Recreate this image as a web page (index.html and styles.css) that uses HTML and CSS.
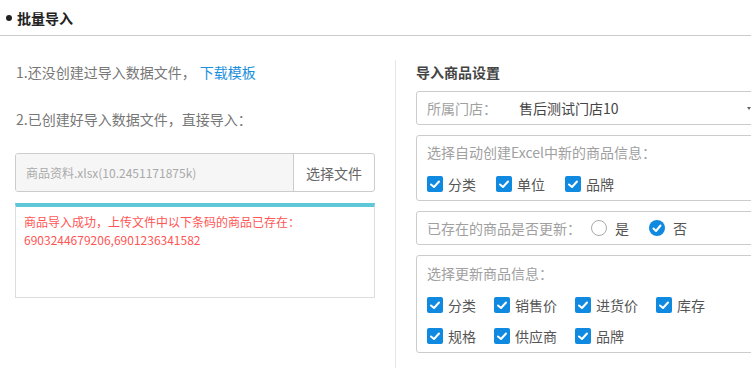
FILE: index.html
```html
<!DOCTYPE html>
<html lang="zh-CN">
<head>
    <meta charset="UTF-8">
    <meta name="viewport" content="width=device-width, initial-scale=1.0">
    <title>批量导入</title>
    <link rel="stylesheet" href="styles.css">
</head>
<body>

    <div class="page-title"><span class="dot"></span>批量导入</div>

    <div class="main">
        <div class="left">
            <p class="step">1.还没创建过导入数据文件，<a class="link" href="#">下载模板</a></p>
            <p class="step step-2">2.已创建好导入数据文件，直接导入：</p>

            <div class="file-box">
                <div class="file-name">商品资料.xlsx(10.2451171875k)</div>
                <div class="file-btn">选择文件</div>
            </div>

            <div class="result">
                商品导入成功，上传文件中以下条码的商品已存在：<br>
                6903244679206,6901236341582
            </div>
        </div>

        <div class="right">
            <h3 class="settings-title">导入商品设置</h3>

            <div class="field field-select">
                <span class="field-label store-label">所属门店：</span>
                <span class="field-value">售后测试门店10</span>
                <span class="caret"></span>
            </div>

            <div class="field field-group">
                <div class="field-label">选择自动创建Excel中新的商品信息：</div>
                <div class="checks">
                    <label class="check"><span class="cb"><svg viewBox="0 0 16 16"><polyline points="4,8.5 7,11 12,5.5"/></svg></span>分类</label>
                    <label class="check"><span class="cb"><svg viewBox="0 0 16 16"><polyline points="4,8.5 7,11 12,5.5"/></svg></span>单位</label>
                    <label class="check"><span class="cb"><svg viewBox="0 0 16 16"><polyline points="4,8.5 7,11 12,5.5"/></svg></span>品牌</label>
                </div>
            </div>

            <div class="field field-radio">
                <span class="field-label">已存在的商品是否更新：</span>
                <label class="radio"><span class="rb"></span>是</label>
                <label class="radio"><span class="rb on"><svg viewBox="0 0 16 16"><polyline points="4.5,8.5 7,11 11.5,5.5"/></svg></span>否</label>
            </div>

            <div class="field field-group update-group">
                <div class="field-label">选择更新商品信息：</div>
                <div class="checks">
                    <label class="check"><span class="cb"><svg viewBox="0 0 16 16"><polyline points="4,8.5 7,11 12,5.5"/></svg></span>分类</label>
                    <label class="check"><span class="cb"><svg viewBox="0 0 16 16"><polyline points="4,8.5 7,11 12,5.5"/></svg></span>销售价</label>
                    <label class="check"><span class="cb"><svg viewBox="0 0 16 16"><polyline points="4,8.5 7,11 12,5.5"/></svg></span>进货价</label>
                    <label class="check"><span class="cb"><svg viewBox="0 0 16 16"><polyline points="4,8.5 7,11 12,5.5"/></svg></span>库存</label>
                </div>
                <div class="checks checks-2">
                    <label class="check"><span class="cb"><svg viewBox="0 0 16 16"><polyline points="4,8.5 7,11 12,5.5"/></svg></span>规格</label>
                    <label class="check"><span class="cb"><svg viewBox="0 0 16 16"><polyline points="4,8.5 7,11 12,5.5"/></svg></span>供应商</label>
                    <label class="check"><span class="cb"><svg viewBox="0 0 16 16"><polyline points="4,8.5 7,11 12,5.5"/></svg></span>品牌</label>
                </div>
            </div>
        </div>
    </div>

</body>
</html>
```

FILE: styles.css
```css
body {
    margin: 0;
    font-family: "Noto Sans CJK SC", "Noto Sans", sans-serif;
    font-size: 14px;
    color: #333;
    background: #fff;
    overflow: hidden;
}
.page-title {
    height: 35px;
    border-bottom: 1px solid #ccc;
    display: flex;
    align-items: center;
    padding-left: 6px;
    font-weight: bold;
    color: #222;
}
.dot {
    width: 6px;
    height: 6px;
    border-radius: 50%;
    background: #222;
    margin-right: 5px;
}
.main {
    display: flex;
}
.left {
    width: 360px;
    flex-shrink: 0;
    padding: 26px 20px 0 15px;
}
.step {
    margin: 0;
    padding-left: 1px;
    line-height: 20px;
    color: #777;
}
.step-2 {
    margin-top: 27px;
}
.link {
    color: #1a8fdd;
    text-decoration: none;
    margin-left: 4px;
}
.file-box {
    margin-top: 24px;
    height: 39px;
    box-sizing: border-box;
    border: 1px solid #ccc;
    border-radius: 3px;
    display: flex;
    overflow: hidden;
}
.file-name {
    flex: 1;
    background: #f6f6f6;
    padding-left: 10px;
    display: flex;
    align-items: center;
    font-size: 12px;
    color: #aaa;
}
.file-btn {
    width: 80px;
    border-left: 1px solid #ccc;
    display: flex;
    align-items: center;
    justify-content: center;
    color: #666;
}
.result {
    margin-top: 11px;
    height: 95px;
    box-sizing: border-box;
    border: 1px solid #ddd;
    border-top: 4px solid #5ec8d8;
    padding: 6px 8px;
    font-size: 12px;
    line-height: 18px;
    color: #f55;
}
.right {
    width: 370px;
    flex-shrink: 0;
    margin-top: 24px;
    min-height: 320px;
    border-left: 1px solid #e6e6e6;
    padding: 2px 0 0 20px;
}
.settings-title {
    margin: 0;
    font-size: 14px;
    line-height: 20px;
    color: #444;
}
.field {
    border: 1px solid #ccc;
    border-radius: 3px;
    box-sizing: border-box;
    padding: 0 10px;
}
.field-label {
    font-size: 14px;
    line-height: 20px;
    color: #a0a0a0;
}
.field-select {
    margin-top: 9px;
    height: 34px;
    display: flex;
    align-items: center;
}
.store-label {
    width: 92px;
}
.field-value {
    color: #444;
}
.caret {
    margin-left: auto;
    margin-right: 24px;
    width: 0;
    height: 0;
    border-left: 2px solid transparent;
    border-right: 2px solid transparent;
    border-top: 3px solid #666;
}
.field-group {
    margin-top: 10px;
    padding: 6px 10px 6px;
}
.checks {
    display: flex;
    gap: 20px;
    margin-top: 12px;
}
.update-group {
    padding-top: 7px;
}
.update-group .checks {
    gap: 18px;
}
.update-group .checks-2 {
    margin-top: 11px;
}
.check, .radio {
    display: flex;
    align-items: center;
    height: 20px;
    color: #555;
}
.cb {
    width: 16px;
    height: 16px;
    border-radius: 2px;
    background: #0f8ae0;
    margin-right: 5px;
    display: flex;
}
.cb svg, .rb svg {
    width: 16px;
    height: 16px;
    fill: none;
    stroke: #fff;
    stroke-width: 2;
    stroke-linecap: round;
    stroke-linejoin: round;
}
.field-radio {
    margin-top: 10px;
    height: 34px;
    display: flex;
    align-items: center;
}
.field-radio .field-label {
    margin-right: 10px;
}
.radio {
    margin-right: 20px;
}
.rb {
    width: 16px;
    height: 16px;
    box-sizing: border-box;
    border: 1px solid #aaa;
    border-radius: 50%;
    margin-right: 8px;
    display: flex;
    align-items: center;
    justify-content: center;
}
.rb.on {
    border: none;
    background: #0f8ae0;
}
```
